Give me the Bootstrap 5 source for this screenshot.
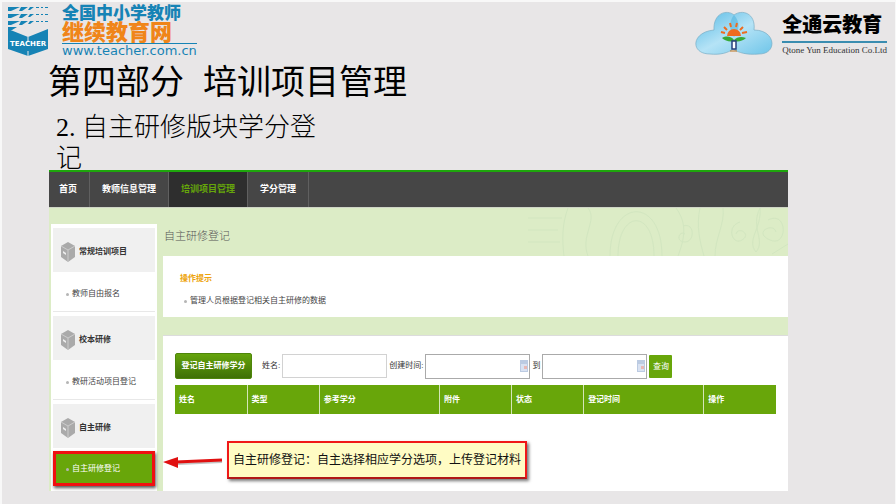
<!DOCTYPE html>
<html lang="zh-CN">
<head>
<meta charset="utf-8">
<meta name="viewport" content="width=device-width, initial-scale=1">
<title>培训项目管理</title>
<link href="https://cdn.jsdelivr.net/npm/bootstrap@5.3.0/dist/css/bootstrap.min.css" rel="stylesheet">
<style>
  body { background: #e8e6e7; color: #000; font-family: "Liberation Sans", "Noto Sans CJK SC", sans-serif; min-height: 100vh; border: 1px solid #f8f8f8; border-width: 2px 1px 0 2px; }
  .site-top { padding: 3px 8px 0 6px; height: 60px; }
  .brand-cn { font-size: 17px; line-height: 18px; font-weight: 900; color: #1683b5; }
  .brand-sub { font-size: 22px; line-height: 20px; font-weight: 900; color: #f08519; }
  .brand-url { font: 13px/14px "DejaVu Sans", sans-serif; color: #1683b5; border-top: 1px solid #1683b5; }
  .brand-url a, .brand-url a:hover { color: inherit; text-decoration: none; }
  .cloud-cn { font-size: 20px; line-height: 24px; font-weight: 900; }
  .cloud-en { font: 9px/14px "Liberation Serif", serif; border-top: 2px solid #3b8db0; color: #333; }
  .slide-title { font-size: 34px; line-height: 40px; padding-left: 46px; white-space: pre; font-weight: 400; }
  .slide-sub { font: 300 26px/31px "Liberation Serif", "Noto Sans CJK SC", serif; margin: 10px 0 0 54px; max-width: 270px; }
  .app { margin: -4px 107px 12px 47px; background: #dcecc6; color: #444; font-size: 8px; line-height: 12px; }
  .main-nav { background: #464646; border-top: 2px solid #1ea70c; border-bottom: 1px solid #cfd5c6; }
  .main-nav a { color: #fff; font-size: 9px; line-height: 35px; font-weight: 700; padding: 0 12px; border-right: 1px solid #606060; text-decoration: none; }
  .main-nav a:first-child { padding: 0 12px 0 10px; }
  .main-nav a.active { background: #2e2e2e; color: #66a60a; }
  .pattern { position: absolute; right: 0; top: 0; pointer-events: none; }
  .app-body { position: relative; padding: 16px 0 0 2px; }
  .side { width: 106px; background: #fff; padding: 4px 2px 5px; flex: none; }
  .side-head { background: #f0f0f0; height: 44px; font-weight: 700; padding: 4px 0 0 8px; margin: 0; font-size: 8px; color: #333; }
  .side-link { height: 40px; margin-bottom: 4px; padding: 5px 0 0 13px; border-bottom: 1px solid #e8e8e8; color: #444; text-decoration: none; }
  .side-link.active { height: 35px; margin: 3px 0 0; padding: 1px 0 0 10px; background: #68a60a; color: #fff; border: 3px solid #f01010; box-shadow: 1px 2px 3px #555; }
  .dot { width: 3px; height: 3px; border-radius: 50%; background: #b5b5b5; margin-right: 3px; flex: none; }
  .main-area { margin-left: 6px; min-width: 0; }
  .page-name { font-size: 11px; line-height: 24px; font-weight: 300; color: #555; margin: 0 0 8px 1px; }
  .tip { background: #fff; padding: 17px 17px 10px; margin-bottom: 18px; }
  .tip-title { color: #eda40c; font-weight: 700; line-height: 12px; margin: 0 0 10px; font-size: 8px; }
  .list-panel { background: #fff; border-top: 1px solid #dcdcdc; padding: 17px 12px 0; }
  .btn-reg { font-size: 8px; line-height: 24px; font-weight: 700; color: #fff; width: 77px; padding: 0; border: 1px solid #4e860a; border-radius: 2px; background: linear-gradient(#65a40c, #3f7007); margin-right: 8px; }
  .search-row label { font-size: 8px; color: #333; white-space: nowrap; margin: 0 2px; }
  .search-row input { width: 105px; height: 24px; font-size: 8px; padding: 0 12px 0 3px; border: 1px solid #d2d2d2; background: #fff; }
  .search-row .date-box input { border-color: #aaa; height: 25px; }
  .date-box svg { position: absolute; right: 1px; top: 6px; }
  .btn-find { font-size: 8px; line-height: 23px; width: 23px; margin-left: 2px; padding: 0; border: 0; border-radius: 1px; color: #fff; background: #68a60a; }
  .grid-table { table-layout: fixed; width: 100%; margin-top: 6px; font-size: 8px; }
  .grid-table th { background: #68a60a; color: #fff; height: 29px; padding: 0 4px; vertical-align: middle; border-left: 1px solid #d4e6b8; }
  .grid-table th:first-child { border-left: 0; }
  .w12 { width: 12%; } .w20 { width: 20%; }
  .callout { position: absolute; left: 114px; bottom: 12px; }
  .note { width: 300px; font-size: 12px; line-height: 34px; text-align: center; white-space: nowrap; color: #111; background: #fffcc4; border: 2px solid #f01818; border-bottom-color: #b01818; box-shadow: 2px 2px 3px #777; }
</style>
<script src="https://cdn.jsdelivr.net/npm/bootstrap@5.3.0/dist/js/bootstrap.bundle.min.js"></script>
</head>
<body>
<header class="site-top d-flex justify-content-between align-items-start">
  <div class="d-flex">
    <svg width="42" height="52" viewBox="0 0 42 52" aria-hidden="true">
      <g fill="#1683b5">
        <path d="M0 2h12L3 6H0zM0 9h12L3 13H0zM0 16h12L3 20H0zM0 22h9L4 25H0z"/>
        <path d="M13 2h7l-6 4h-3zM13 9h7l-6 4h-3zM13 16h7l-6 4h-3zM22 2h4l-4 3h-2zM22 9h4l-4 3h-2zM22 16h4l-4 3h-2zM28 2h3v1h-3zM28 9h3v1h-3zM28 16h3v1h-3zM33 2h2v1h-2zM33 9h2v1h-2zM33 16h2v1h-2zM37 2h3v1h-3zM37 9h3v1h-3zM37 16h3v1h-3z"/>
        <path d="M0 24l20 8 20-8v20L20 51 0 44z"/>
      </g>
      <path d="M20 32v4M20 46v5" stroke="#e8e6e7"/>
      <text x="20" y="41" text-anchor="middle" font-family="DejaVu Sans" font-size="7" font-weight="700" fill="#fff">TEACHER</text>
    </svg>
    <div class="ms-2 ps-1">
      <div class="brand-cn">全国中小学教师</div>
      <div class="brand-sub">继续教育网</div>
      <div class="brand-url"><a href="#">www.teacher.com.cn</a></div>
    </div>
  </div>
  <div class="d-flex">
    <svg width="80" height="52" viewBox="0 0 80 52" aria-hidden="true">
      <defs><linearGradient id="sky" x1="0" y1="0" x2="1" y2="1"><stop offset="0" stop-color="#54b9e4"/><stop offset=".5" stop-color="#b5e3f6"/><stop offset="1" stop-color="#6ec5e9"/></linearGradient></defs>
      <path d="M16 49C-4 49-3 27 20 25C19 8 33 4 40 10C48 4 62 8 60 25C82 25 84 49 65 49C53 50 45 48 39 44C34 48 26 50 16 49z" fill="url(#sky)" stroke="#79aec6" stroke-width=".7"/>
      <path d="M40 10C34 17 36 28 40 32C46 26 46 16 40 10z" fill="#48afdb" opacity=".5"/>
      <path d="M33 31a7 7 0 0 1 14 0z" fill="#ee6c20"/>
      <path d="M31 28l-4-1M33 25l-3-3M37 22l-1-4M42 22l1-4M46 25l3-3M48 28l5-1" stroke="#ee6c20" stroke-width="2"/>
      <path d="M28 33c5-3 10-1 12 2c3-3 7-4 12-2c-3 3-8 4-12 3c-4 1-9 0-12-3z" fill="#37a936"/>
      <path d="M38 36h4v8h-4z" fill="#fff" stroke="#26407c" stroke-width="1.5"/><path d="M36 46h7" stroke="#bd7420" stroke-width="1"/>
    </svg>
    <div class="ms-2 pt-2">
      <div class="cloud-cn">全通云教育</div>
      <div class="cloud-en mt-1">Qtone Yun Education Co.Ltd</div>
    </div>
  </div>
</header>
<h1 class="slide-title m-0">第四部分  培训项目管理</h1>
<h2 class="slide-sub">2. 自主研修版块学分登记</h2>

<div class="app">
  <nav class="main-nav d-flex">
    <a href="#">首页</a><a href="#">教师信息管理</a><a href="#" class="active" aria-current="page">培训项目管理</a><a href="#">学分管理</a>
  </nav>
  <div class="app-body d-flex">
    <svg class="pattern" width="260" height="48" viewBox="0 0 260 48" fill="none" stroke="#d2e6c0" aria-hidden="true">
      <path d="M82 48c0-58 52-60 52 0M90 48c0-46 36-48 36 0M40 0c-6 16-6 32-4 48M60 0c10 12-8 28 0 48M148 0c12 16 8 32 2 48M172 0c-4 18 0 34 4 48M195 0c2 16-8 30-8 48M0 10h34M0 22h30M0 34h32M155 18c12-4 12 16 2 16s-6-12 0-8M212 14c-14 4-8 24 2 18s-4-14-6-6M232 0c2 20-14 32-4 44c10-12-6-24 4-44M240 12c20-10 20 28 2 20s4-18 6-8M244 46l16-10"/>
    </svg>
    <aside class="side">
      <h3 class="side-head d-flex align-items-center gap-1"><svg width="14" height="20" viewBox="0 0 14 20" aria-hidden="true"><path d="M7 0l7 4v11l-7 5-7-5V4z" fill="#aaa"/><path d="M0 4l7 4 7-4M7 8v12" stroke="#ccc" fill="none"/><path d="M2 9l3 2v2l-3-2z" fill="#eee"/></svg>常规培训项目</h3>
      <a href="#" class="side-link d-flex align-items-center"><span class="dot"></span>教师自由报名</a>
      <h3 class="side-head d-flex align-items-center gap-1"><svg width="14" height="20" viewBox="0 0 14 20" aria-hidden="true"><path d="M7 0l7 4v11l-7 5-7-5V4z" fill="#aaa"/><path d="M0 4l7 4 7-4M7 8v12" stroke="#ccc" fill="none"/><path d="M2 9l3 2v2l-3-2z" fill="#eee"/></svg>校本研修</h3>
      <a href="#" class="side-link d-flex align-items-center"><span class="dot"></span>教研活动项目登记</a>
      <h3 class="side-head d-flex align-items-center gap-1"><svg width="14" height="20" viewBox="0 0 14 20" aria-hidden="true"><path d="M7 0l7 4v11l-7 5-7-5V4z" fill="#aaa"/><path d="M0 4l7 4 7-4M7 8v12" stroke="#ccc" fill="none"/><path d="M2 9l3 2v2l-3-2z" fill="#eee"/></svg>自主研修</h3>
      <a href="#" class="side-link active d-flex align-items-center"><span class="dot"></span>自主研修登记</a>
    </aside>
    <main class="main-area flex-fill d-flex flex-column">
      <h3 class="page-name">自主研修登记</h3>
      <section class="tip">
        <h4 class="tip-title">操作提示</h4>
        <div class="d-flex align-items-center ps-1"><span class="dot"></span>管理人员根据登记相关自主研修的数据</div>
      </section>
      <section class="list-panel flex-fill">
        <form class="search-row d-flex align-items-center">
          <button type="button" class="btn btn-reg">登记自主研修学分</button>
          <label for="who">姓名:</label><input id="who" type="text">
          <label for="from">创建时间:</label>
          <span class="date-box position-relative d-flex"><input id="from" type="text"><svg width="9" height="12" viewBox="0 0 9 12" aria-hidden="true"><path d="M0 0h8v12H0z" fill="#bccbe2"/><path d="M1 4h6v7H1z" fill="#d9e2f2"/><path d="M4 6h3v3H4z" fill="#e8b8b4"/></svg></span>
          <label for="to">到</label>
          <span class="date-box position-relative d-flex"><input id="to" type="text"><svg width="9" height="12" viewBox="0 0 9 12" aria-hidden="true"><path d="M0 0h8v12H0z" fill="#bccbe2"/><path d="M1 4h6v7H1z" fill="#d9e2f2"/><path d="M4 6h3v3H4z" fill="#e8b8b4"/></svg></span>
          <button type="button" class="btn btn-find">查询</button>
        </form>
        <table class="grid-table">
          <thead><tr><th class="w12">姓名</th><th class="w12">类型</th><th class="w20">参考学分</th><th class="w12">附件</th><th class="w12">状态</th><th class="w20">登记时间</th><th class="w12">操作</th></tr></thead>
        </table>
      </section>
    </main>
    <div class="callout d-flex align-items-center">
      <svg width="64" height="20" viewBox="0 0 64 20" aria-hidden="true"><path d="M15 14l44-2" stroke="#888" stroke-width="2" opacity=".5"/><path d="M13 12l46-2" stroke="#e01010" stroke-width="3"/><path d="M0 12l15-5v11z" fill="#e01010"/></svg>
      <div class="note">自主研修登记：自主选择相应学分选项，上传登记材料</div>
    </div>
  </div>
</div>
</body>
</html>
